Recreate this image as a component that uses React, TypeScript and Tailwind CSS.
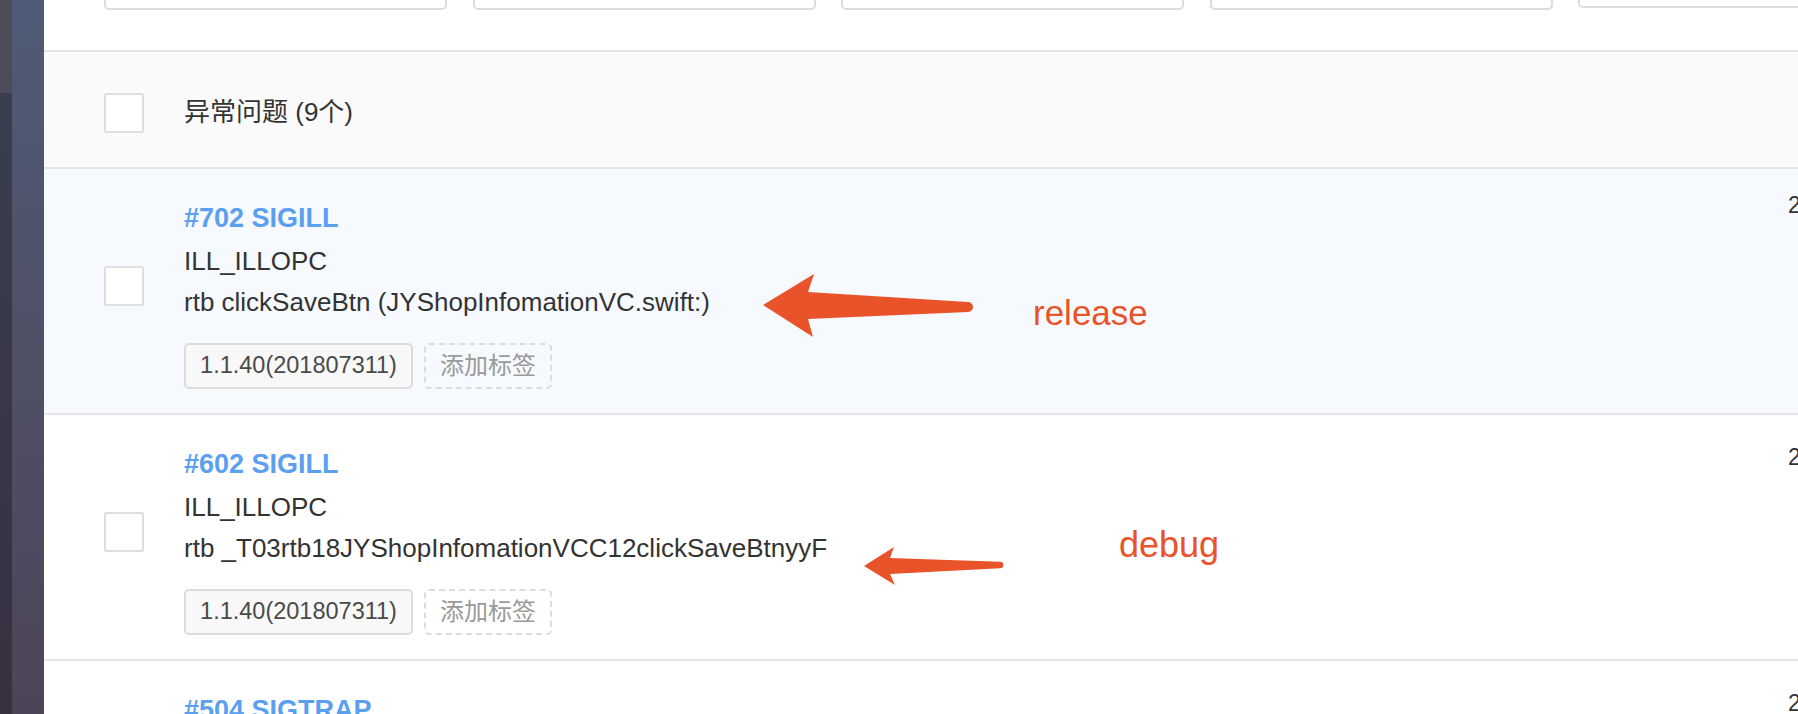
import { FC } from "react";

type Issue = {
  id: number;
  signal: string;
  code: string;
  frame: string;
  version: string;
  time: string;
  active?: boolean;
};

const issues: Issue[] = [
  {
    id: 702,
    signal: "SIGILL",
    code: "ILL_ILLOPC",
    frame: "rtb clickSaveBtn (JYShopInfomationVC.swift:)",
    version: "1.1.40(201807311)",
    time: "2018-08-01 10:21:35",
    active: true,
  },
  {
    id: 602,
    signal: "SIGILL",
    code: "ILL_ILLOPC",
    frame: "rtb _T03rtb18JYShopInfomationVCC12clickSaveBtnyyF",
    version: "1.1.40(201807311)",
    time: "2018-07-31 18:02:11",
  },
  {
    id: 504,
    signal: "SIGTRAP",
    code: "EXC_BREAKPOINT",
    frame: "rtb closure (JYShopInfomationVC.swift:)",
    version: "1.1.40(201807311)",
    time: "2018-07-31 16:40:08",
  },
];

const Checkbox: FC = () => (
  <div className="w-[40px] h-[40px] border-2 border-[#dfdfdf] bg-white rounded-[2px]" />
);

const IssueRow: FC<{ issue: Issue }> = ({ issue }) => (
  <div
    className={`flex border-b-2 border-[#e6e6e6] ${
      issue.active ? "bg-[#f6faff]" : "bg-white"
    }`}
  >
    <div className="w-[140px] shrink-0 pl-[60px] pt-[97px]">
      <Checkbox />
    </div>
    <div className="flex-1 pt-[27px] pb-[24px]">
      <div className="text-[27px] leading-[44px] font-bold text-[#5b9ff0]">
        #{issue.id} {issue.signal}
      </div>
      <div className="text-[26px] leading-[42px] text-[#333]">{issue.code}</div>
      <div className="text-[26px] leading-[40px] text-[#333]">{issue.frame}</div>
      <div className="flex gap-[11px] mt-[21px]">
        <div className="w-[229px] h-[46px] flex items-center justify-center border-2 border-[#dcdcdc] rounded-[5px] bg-[#f8f8f8] text-[23.5px] text-[#4a4a4a]">
          {issue.version}
        </div>
        <div className="w-[128px] h-[46px] flex items-center justify-center border-2 border-dashed border-[#dcdcdc] rounded-[5px] text-[24px] text-[#9a9a9a]">
          添加标签
        </div>
      </div>
    </div>
    <div
      className={`w-[10px] shrink-0 whitespace-nowrap text-[23px] leading-[27px] text-[#333] ${
        issue.active ? "pt-[23px]" : "pt-[29px]"
      }`}
    >
      {issue.time}
    </div>
  </div>
);

const App: FC = () => {
  return (
    <div className="relative flex h-[714px] w-full overflow-hidden bg-white font-['Liberation_Sans','Noto_Sans_CJK_SC',sans-serif]">
      {/* blurred window edge on the left */}
      <div className="flex w-[44px] shrink-0">
        <div className="w-[12px] flex flex-col">
          <div className="h-[93px] bg-[#4b4d58]" />
          <div className="flex-1 bg-gradient-to-b from-[#3a3e50] to-[#37303f]" />
        </div>
        <div className="w-[32px] bg-gradient-to-b from-[#4f5b77] via-[#4f5066] to-[#4d4458]" />
      </div>

      <div className="flex-1 min-w-0">
        {/* filter inputs, cut off at the top */}
        <div className="h-[50px] flex items-start gap-[25.5px] pl-[60px]">
          {[0, 1, 2, 3].map((i) => (
            <div
              key={i}
              className="w-[343px] h-[10px] shrink-0 border-2 border-t-0 border-[#dcdcdc] rounded-b-[5px]"
            />
          ))}
          <div className="w-[343px] h-[8px] shrink-0 border-2 border-t-0 border-[#dcdcdc] rounded-b-[5px]" />
        </div>

        <div className="flex items-center h-[119px] pt-[6px] border-y-2 border-[#e4e4e4] bg-[#fafafa] pl-[60px]">
          <Checkbox />
          <span className="ml-[40px] text-[26px] text-[#333]">异常问题 (9个)</span>
        </div>

        {issues.map((issue) => (
          <IssueRow key={issue.id} issue={issue} />
        ))}
      </div>

      {/* annotations drawn over the screenshot */}
      <svg
        className="absolute inset-0 pointer-events-none"
        width="1798"
        height="714"
        viewBox="0 0 1798 714"
      >
        <path
          d="M763 305 L814 274 L808 292 L968 302 A5 5 0 0 1 968 312 L808 319 L813 337 Z"
          fill="#e9532a"
        />
        <path
          d="M864 566 L894 547 L890 558 L1000 561.7 A3.3 3.3 0 0 1 1000 568.3 L890 574 L895 585 Z"
          fill="#e9532a"
        />
      </svg>
      <span className="absolute left-[1033px] top-[295px] text-[35px] leading-[35px] text-[#e9532a]">
        release
      </span>
      <span className="absolute left-[1119px] top-[527px] text-[36px] leading-[36px] text-[#e9532a]">
        debug
      </span>
    </div>
  );
};

export default App;
